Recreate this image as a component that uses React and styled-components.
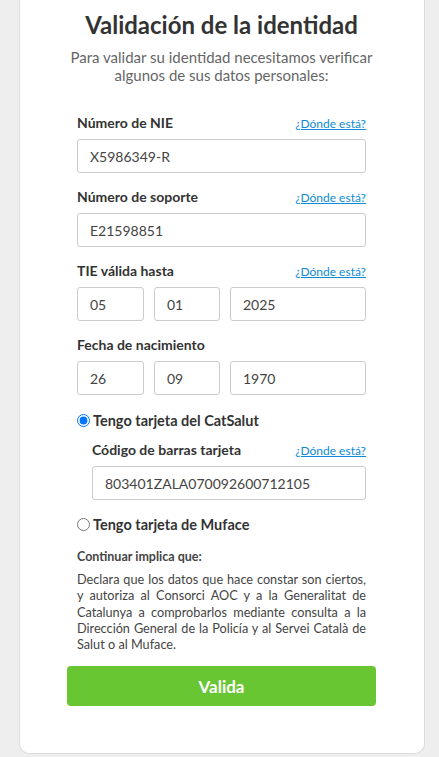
import styled, { createGlobalStyle } from "styled-components";

const GlobalStyle = createGlobalStyle`
  body {
    margin: 0;
    background-color: #eeeeee;
    font-family: Lato, "Open Sans", sans-serif;
  }
`;

const Card = styled.div`
  width: 406px;
  box-sizing: border-box;
  margin: 0 0 5px 19px;
  padding: 10px 48px 47px 47px;
  background-color: #fff;
  border: 1px solid #dcdcdc;
  border-top: none;
  border-radius: 0 0 10px 10px;
`;

const Title = styled.h1`
  margin: 0;
  font-size: 24px;
  line-height: 30px;
  font-weight: 700;
  color: #333;
  text-align: center;
`;

const Subtitle = styled.p`
  margin: 8px 0 0;
  font-size: 15px;
  line-height: 18px;
  color: #666;
  text-align: center;
  white-space: nowrap;
`;

const Form = styled.form`
  padding: 30px 10px 0;
`;

const Field = styled.div`
  margin-left: ${(p) => (p.$indent ? "15px" : "0")};
  margin-bottom: 15px;
`;

const LabelRow = styled.div`
  display: flex;
  justify-content: space-between;
  align-items: baseline;
  margin-bottom: 7px;
`;

const Label = styled.label`
  font-size: 14px;
  font-weight: 700;
  color: #333;
  line-height: 18px;
`;

const Where = styled.a`
  font-size: 12px;
  color: #0e8ad6;
  text-decoration: underline;
  cursor: pointer;
`;

const Input = styled.input`
  display: block;
  width: 100%;
  box-sizing: border-box;
  height: 34px;
  padding: 0 12px;
  border: 1px solid #cccccc;
  border-radius: 3px;
  font-family: Lato, sans-serif;
  font-size: 14px;
  color: #444;
  background: #fff;
`;

const DateRow = styled.div`
  display: grid;
  grid-template-columns: 67px 66px 1fr;
  gap: 10px;
`;

const Radio = styled.label`
  display: flex;
  align-items: center;
  gap: 3px;
  height: 18px;
  font-size: 14.5px;
  font-weight: 700;
  color: #333;
  margin-top: ${(p) => p.$mt || "0"};
  margin-bottom: ${(p) => p.$mb || "0"};

  input {
    margin: 0;
    width: 13px;
    height: 13px;
  }
`;

const NoteTitle = styled.div`
  font-size: 12.5px;
  line-height: 15px;
  font-weight: 700;
  color: #444;
  margin-top: 16px;
`;

const Note = styled.p`
  margin: 7px 0 0;
  font-size: 12.7px;
  line-height: 16.3px;
  color: #444;
  text-align: justify;
`;

const Button = styled.button`
  display: block;
  width: 100%;
  height: 40px;
  margin-top: 14px;
  border: none;
  border-radius: 4px;
  background-color: #69c633;
  color: #fff;
  font-family: Lato, sans-serif;
  font-size: 17px;
  font-weight: 700;
  cursor: pointer;
`;

const App = () => {
  return (
    <>
      <GlobalStyle />
      <Card>
        <Title>Validación de la identidad</Title>
        <Subtitle>
          Para validar su identidad necesitamos verificar
          <br />
          algunos de sus datos personales:
        </Subtitle>
        <Form>
          <Field>
            <LabelRow>
              <Label>Número de NIE</Label>
              <Where>¿Dónde está?</Where>
            </LabelRow>
            <Input defaultValue="X5986349-R" />
          </Field>
          <Field>
            <LabelRow>
              <Label>Número de soporte</Label>
              <Where>¿Dónde está?</Where>
            </LabelRow>
            <Input defaultValue="E21598851" />
          </Field>
          <Field>
            <LabelRow>
              <Label>TIE válida hasta</Label>
              <Where>¿Dónde está?</Where>
            </LabelRow>
            <DateRow>
              <Input defaultValue="05" />
              <Input defaultValue="01" />
              <Input defaultValue="2025" />
            </DateRow>
          </Field>
          <Field>
            <LabelRow>
              <Label>Fecha de nacimiento</Label>
            </LabelRow>
            <DateRow>
              <Input defaultValue="26" />
              <Input defaultValue="09" />
              <Input defaultValue="1970" />
            </DateRow>
          </Field>
          <Radio $mt="16px" $mb="12px">
            <input type="radio" name="card" defaultChecked />
            Tengo tarjeta del CatSalut
          </Radio>
          <Field $indent>
            <LabelRow>
              <Label>Código de barras tarjeta</Label>
              <Where>¿Dónde está?</Where>
            </LabelRow>
            <Input defaultValue="803401ZALA070092600712105" />
          </Field>
          <Radio>
            <input type="radio" name="card" />
            Tengo tarjeta de Muface
          </Radio>
          <NoteTitle>Continuar implica que:</NoteTitle>
          <Note>
            Declara que los datos que hace constar son ciertos, y autoriza al
            Consorci AOC y a la Generalitat de Catalunya a comprobarlos
            mediante consulta a la Dirección General de la Policía y al Servei
            Català de Salut o al Muface.
          </Note>
        </Form>
        <Button>Valida</Button>
      </Card>
    </>
  );
};

export default App;
